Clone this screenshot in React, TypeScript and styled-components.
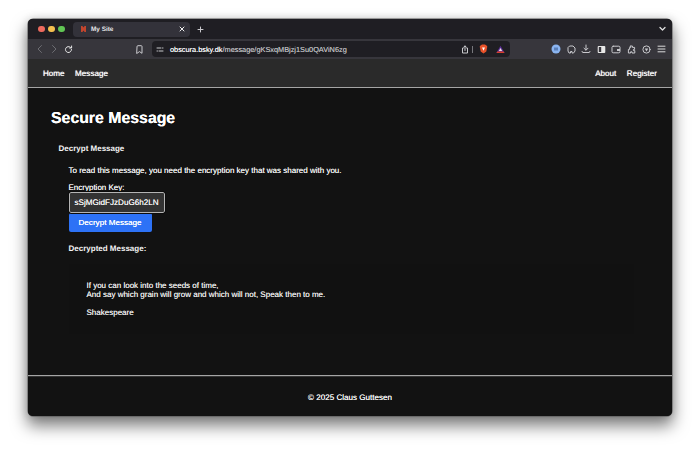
import React from "react";
import styled, { createGlobalStyle } from "styled-components";

const Global = createGlobalStyle`
  html, body { margin: 0; padding: 0; background: #fff; width: 700px; height: 454px; overflow: hidden; }
  body { font-family: "Liberation Sans", Arial, sans-serif; -webkit-font-smoothing: antialiased; text-rendering: geometricPrecision; }
`;

const Stage = styled.div`
  width: 700px; height: 454px; padding: 19px 28px 38px; box-sizing: border-box; background: #fff;
`;
const Window = styled.div`
  width: 644px; height: 397px; border-radius: 5px; overflow: hidden; display: flex; flex-direction: column;
  background: #121212;
  box-shadow: 0 0 0 0.5px #555, 0 9px 16px 1px rgba(0,0,0,.5), 0 0 8px rgba(0,0,0,.16);
`;
const TabBar = styled.div`
  height: 20px; flex: none; background: #1f1e23; display: flex; align-items: center; padding: 0 6px 0 10px; box-sizing: border-box;
`;
const Light = styled.span<{ $c: string }>`
  width: 6.5px; height: 6.5px; border-radius: 50%; background: ${p => p.$c}; margin-right: 3.5px; flex: none;
`;
const Tab = styled.div`
  width: 117px; height: 15px; margin-left: 5px; background: #33323a; border-radius: 4px; display: flex; align-items: center;
  padding: 0 5px 0 7px; box-sizing: border-box; color: #e8e8ea; font-size: 6.4px; font-weight: 600;
`;
const TabTitle = styled.span` margin-left: 4px; flex: 1; `;
const NewTab = styled.div` margin-left: 7px; display: flex; color: #cfcfd2; `;
const Spacer = styled.div` flex: 1; `;
const Toolbar = styled.div`
  height: 20px; flex: none; background: #37363c; display: flex; align-items: center; padding: 0 6px 0 8px; box-sizing: border-box;
`;
const NavIcons = styled.div` display: flex; align-items: center; gap: 6px; width: 100px; flex: none; `;
const BookmarkBox = styled.div` display: flex; width: 16px; flex: none; `;
const UrlBar = styled.div`
  width: 358px; height: 16px; flex: none; background: #1f1e23; border-radius: 4px; display: flex; align-items: center;
  padding: 0 5px 0 4px; box-sizing: border-box; color: #b4b4b8; font-size: 7.35px; white-space: nowrap; text-shadow: 0 0 .4px currentColor;
`;
const UrlText = styled.span` margin-left: 6px; flex: 1; strong { color: #f0f0f2; font-weight: 400; } `;
const UrlDivider = styled.span` width: 1px; height: 7px; background: #77777c; margin: 0 5.5px 0 3px; `;
const Extensions = styled.div` display: flex; align-items: center; margin-left: auto; gap: 5px; `;
const ExtSlot = styled.div` width: 10px; display: flex; justify-content: center; flex: none; `;
const SiteNav = styled.div`
  height: 29px; flex: none; background: #2a2a2a; display: flex; align-items: center; justify-content: space-between;
  padding: 1px 15px 0; box-sizing: border-box; border-bottom: 1px solid #a5a5a5; box-shadow: 0 1px 0 #3a3a3a;
`;
const NavGroup = styled.div` display: flex; gap: 10.5px; `;
const NavLink = styled.span`
  color: #fff; font-size: 8.1px; text-shadow: 0 0 .7px #fff; line-height: 10px;
`;
const Main = styled.main`
  flex: 1; padding: 21px 23px 0; box-sizing: border-box; color: #fff; background: #121212;
`;
const Heading = styled.h1`
  margin: 0; font-size: 15.85px; line-height: 19px; font-weight: 700; color: #fff; text-shadow: 0 0 .6px #fff;
`;
const Card = styled.section` margin: 15px 0 0 7.5px; `;
const CardTitle = styled.h2`
  margin: 0; font-size: 8px; line-height: 11px; font-weight: 700; color: #f4f4f4;
`;
const CardBody = styled.div` margin: 11px 0 0 10px; `;
const Body = styled.p`
  margin: 0; font-size: 8px; line-height: 11px; color: #ececec; text-shadow: 0 0 .6px #ececec;
`;
const Label = styled.label`
  display: block; margin-top: 7.5px; font-size: 8px; line-height: 8px; color: #f0f0f0; text-shadow: 0 0 .6px #f0f0f0;
`;
const KeyInput = styled.div`
  width: 96px; height: 21px; margin-top: 0; box-sizing: border-box; background: #333; border: 1px solid #b4b4b4; border-radius: 2px;
  outline: 1px solid #0c0c0c; display: flex; align-items: center; justify-content: center;
  color: #f2f2f2; font-size: 8.1px; white-space: nowrap; overflow: hidden; text-shadow: 0 0 .5px #f2f2f2;
`;
const Button = styled.button`
  display: block; width: 83px; height: 19px; margin: 0; padding: 0; border: 0; border-radius: 2px; background: #2d72f6;
  color: #fff; font: 400 8.1px "Liberation Sans", Arial, sans-serif; text-shadow: 0 0 .5px #fff;
`;
const SubTitle = styled.h3`
  margin: 11.5px 0 0; font-size: 8px; line-height: 11px; font-weight: 700; color: #f4f4f4;
`;
const MessageBox = styled.div`
  margin-top: 10px; width: 565px; height: 70px; box-sizing: border-box; padding: 16.5px 18px 0; background: #111;
  font-size: 8px; line-height: 9px; color: #e4e4e4; text-shadow: 0 0 .6px #e4e4e4;
`;
const MessageGap = styled.p` margin: 0 0 9px; `;
const Footer = styled.footer`
  height: 41px; flex: none; box-sizing: border-box; background: #121212; border-top: 1px solid #a5a5a5; box-shadow: inset 0 1px 0 #333;
  display: flex; align-items: center; justify-content: center; color: #f2f2f2; font-size: 8.05px; padding-top: 3px; text-shadow: 0 0 .6px #f2f2f2;
`;

const Stroke = { fill: "none", stroke: "currentColor", strokeWidth: 1, strokeLinecap: "round", strokeLinejoin: "round" } as const;
const Ic = styled.svg<{ $c?: string }>` color: ${p => p.$c || "#c9c9cd"}; display: block; flex: none; `;

export default function App() {
  return (
    <Stage>
      <Global />
      <Window>
        <TabBar>
          <Light $c="#ed6a5e" /><Light $c="#f4bf4f" /><Light $c="#61c554" />
          <Tab>
            <Ic width="7" height="8" viewBox="0 0 7 8"><path d="M1 1h1.4l1.1 1.4L4.6 1H6v6H4.6L3.5 5.4 2.4 7H1z" fill="#c2452d" /></Ic>
            <TabTitle>My Site</TabTitle>
            <Ic width="6" height="6" viewBox="0 0 6 6" $c="#f0f0f0"><path d="M1 1l4 4M5 1L1 5" {...Stroke} /></Ic>
          </Tab>
          <NewTab>
            <Ic width="7" height="7" viewBox="0 0 7 7"><path d="M3.5 1v5M1 3.5h5" {...Stroke} /></Ic>
          </NewTab>
          <Spacer />
          <Ic width="7" height="6" viewBox="0 0 7 6" $c="#e0e0e0"><path d="M1 1.5l2.5 2.5L6 1.5" {...Stroke} strokeWidth={1.3} /></Ic>
        </TabBar>
        <Toolbar>
          <NavIcons>
            <Ic width="8" height="10" viewBox="0 0 8 10" $c="#6d6d72"><path d="M5.5 1.5L2 5l3.5 3.5" {...Stroke} /></Ic>
            <Ic width="8" height="10" viewBox="0 0 8 10" $c="#6d6d72"><path d="M2.5 1.5L6 5 2.5 8.5" {...Stroke} /></Ic>
            <Ic width="9" height="9" viewBox="0 0 9 9" $c="#e8e8e8"><path d="M7.5 4.5a3 3 0 1 1-1-2.2M7.6 1v2H5.6" {...Stroke} /></Ic>
          </NavIcons>
          <BookmarkBox>
            <Ic width="7" height="9" viewBox="0 0 7 9"><path d="M1 1.5q0-.8.8-.8h3.4q.8 0 .8.8v6.8L3.5 6.6 1 8.3z" {...Stroke} /></Ic>
          </BookmarkBox>
          <UrlBar>
            <Ic width="8" height="7" viewBox="0 0 8 7"><path d="M1 2h4M6.5 2h.5M1 5h.5M3 5h4" {...Stroke} /></Ic>
            <UrlText><strong>obscura.bsky.dk</strong>/message/gKSxqMBjzj1Su0QAViN6zg</UrlText>
            <Ic width="8" height="9" viewBox="0 0 8 9"><path d="M2.3 3H1.5v5h5V3h-.8M4 5.5V1M2.8 2L4 1l1.2 1" {...Stroke} /></Ic>
            <UrlDivider />
            <Ic width="9" height="10" viewBox="0 0 9 10" style={{ marginRight: 8.5 }}><path d="M1.6 1.4L3 .6h3l1.4.8.9 1-1 5L4.5 9.6 1.7 7.4l-1-5z" fill="#e8522a" /><path d="M3 3.4h3L4.5 6.8z" fill="#fff" /></Ic>
            <Ic width="9" height="9" viewBox="0 0 9 9"><path d="M4.5 .8L8.6 8H.4z" fill="#5a2e98" /><path d="M4.5 3L6.2 6H2.8z" fill="#f0e0e0" /><path d="M1.5 6.5h6L8.6 8H.4z" fill="#d9402b" /></Ic>
          </UrlBar>
          <Extensions>
            <ExtSlot><Ic width="10" height="10" viewBox="0 0 10 10"><circle cx="5" cy="5" r="4.5" fill="#8ab4f0" /><path d="M4 3.5v3M6 3.5v3" stroke="#2a4a80" /></Ic></ExtSlot>
            <ExtSlot><Ic width="9" height="9" viewBox="0 0 9 9"><path d="M3 1h3l2 2v3L6.5 8H5V6.5H3.5V8H2L1 6V3z" {...Stroke} /></Ic></ExtSlot>
            <ExtSlot><Ic width="10" height="10" viewBox="0 0 10 10"><path d="M5 1v5M3 4.2L5 6.2l2-2M1 7.5q0 1 1 1h6q1 0 1-1" {...Stroke} /></Ic></ExtSlot>
            <ExtSlot><Ic width="9" height="9" viewBox="0 0 9 9"><rect x=".7" y="1" width="7.6" height="7" rx="1" fill="#e8e8e8" /><rect x="1.8" y="2" width="2.4" height="5" fill="#37363c" /></Ic></ExtSlot>
            <ExtSlot><Ic width="10" height="9" viewBox="0 0 10 9"><rect x="1" y="1.2" width="8" height="6.6" rx="1.2" {...Stroke} /><path d="M6 4h3v2H6z" fill="currentColor" /></Ic></ExtSlot>
            <ExtSlot><Ic width="9" height="9" viewBox="0 0 9 9"><path d="M3.4 1h2v1.4h2.2v2H6.4v1.2h1.4V8H5V6.8H3.6V8H1.4V4.4h1.2V2.4h.8z" {...Stroke} /></Ic></ExtSlot>
            <ExtSlot><Ic width="9" height="9" viewBox="0 0 9 9"><circle cx="4.5" cy="4.5" r="3.6" {...Stroke} /><path d="M2.8 3.4h3.4L4.5 6.4z" fill="currentColor" /></Ic></ExtSlot>
            <ExtSlot><Ic width="9" height="8" viewBox="0 0 9 8" $c="#dcdcdc"><path d="M1 1.2h7M1 4h7M1 6.8h7" {...Stroke} /></Ic></ExtSlot>
          </Extensions>
        </Toolbar>
        <SiteNav>
          <NavGroup><NavLink>Home</NavLink><NavLink>Message</NavLink></NavGroup>
          <NavGroup><NavLink>About</NavLink><NavLink>Register</NavLink></NavGroup>
        </SiteNav>
        <Main>
          <Heading>Secure Message</Heading>
          <Card>
            <CardTitle>Decrypt Message</CardTitle>
            <CardBody>
              <Body>To read this message, you need the encryption key that was shared with you.</Body>
              <Label>Encryption Key:</Label>
              <KeyInput>sSjMGidFJzDuG6h2LN</KeyInput>
              <Button>Decrypt Message</Button>
              <SubTitle>Decrypted Message:</SubTitle>
              <MessageBox>
                <MessageGap>If you can look into the seeds of time,<br />And say which grain will grow and which will not, Speak then to me.</MessageGap>
                <MessageGap>Shakespeare</MessageGap>
              </MessageBox>
            </CardBody>
          </Card>
        </Main>
        <Footer>© 2025 Claus Guttesen</Footer>
      </Window>
    </Stage>
  );
}
